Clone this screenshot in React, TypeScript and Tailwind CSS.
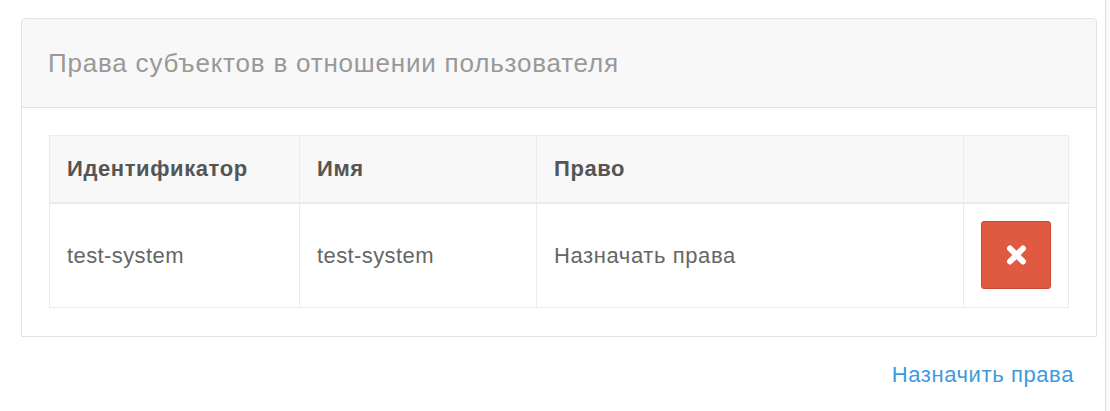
import React from "react";

export default function App() {
  const font = { fontFamily: '"Liberation Sans", Arial, sans-serif' };
  return (
    <div className="flex w-[1110px] h-[411px] bg-white" style={font}>
      <div className="w-[1105px] h-full pl-[21px] pr-[8px] pt-[18px]">
        <div className="border border-[#e3e3e3] rounded-t-[4px] bg-white">
          <div className="h-[89px] bg-[#f8f8f8] border-b border-[#e3e3e3] rounded-t-[4px] pl-[26px] flex items-center">
            <span className="text-[26px] tracking-[0.8px] text-[#999999]">Права субъектов в отношении пользователя</span>
          </div>
          <div className="px-[27px] pt-[27px] pb-[28px]">
            <table className="w-full border-collapse border border-[#ebebeb] text-[22px] tracking-[0.4px]">
              <thead>
                <tr className="bg-[#f8f8f8] h-[67px]">
                  <th className="w-[250px] border border-[#ebebeb] border-b-2 text-left pl-[17px] font-bold text-[#555555] tracking-[0.6px]">Идентификатор</th>
                  <th className="w-[237px] border border-[#ebebeb] border-b-2 text-left pl-[17px] font-bold text-[#555555] tracking-[0.6px]">Имя</th>
                  <th className="w-[427px] border border-[#ebebeb] border-b-2 text-left pl-[17px] font-bold text-[#555555] tracking-[0.6px]">Право</th>
                  <th className="border border-[#ebebeb] border-b-2"></th>
                </tr>
              </thead>
              <tbody>
                <tr className="h-[105px]">
                  <td className="border border-[#ebebeb] pl-[17px] text-[#666666]">test-system</td>
                  <td className="border border-[#ebebeb] pl-[17px] text-[#666666]">test-system</td>
                  <td className="border border-[#ebebeb] pl-[17px] text-[#666666] tracking-[0.6px]">Назначать права</td>
                  <td className="border border-[#ebebeb] pl-[17px]">
                    <button className="w-[70px] h-[68px] bg-[#e05a42] border border-[#cf4a33] rounded-[3px] flex items-center justify-center">
                      <svg width="21" height="20" viewBox="0 0 21 20">
                        <path d="M4 3.5 L17 16.5 M17 3.5 L4 16.5" stroke="#ffffff" strokeWidth="6" strokeLinecap="round" />
                      </svg>
                    </button>
                  </td>
                </tr>
              </tbody>
            </table>
          </div>
        </div>
        <div className="flex justify-end pr-[23px] pt-[21px]">
          <a className="text-[22px] tracking-[0.6px] text-[#3d9bdb] cursor-pointer">Назначить права</a>
        </div>
      </div>
      <div className="flex-1 h-full border-l border-[#dddddd] bg-[#f9f9f9]"></div>
    </div>
  );
}
